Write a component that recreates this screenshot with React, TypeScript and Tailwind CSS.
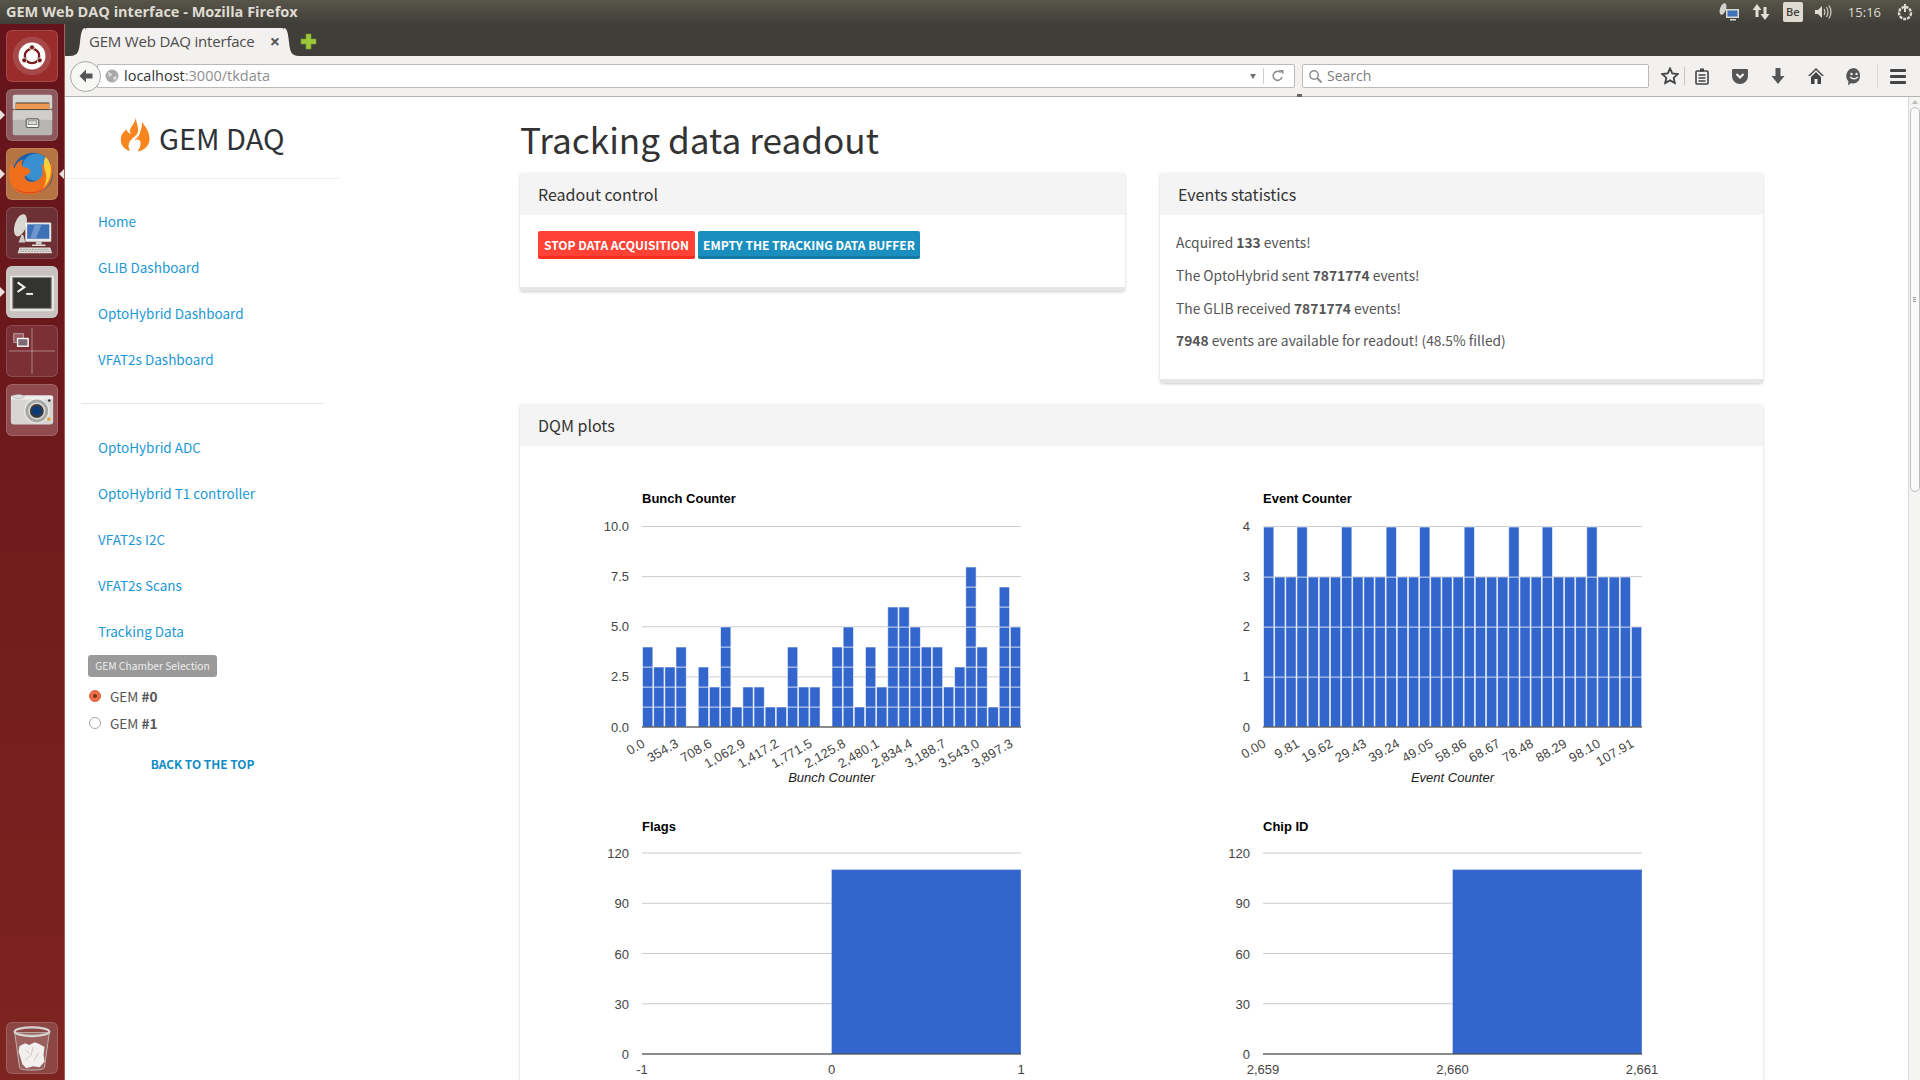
import React from "react";

const chartFont = "'Liberation Sans', Arial, sans-serif";

function Tile({ bg, children, marker, active }: { bg: string; children?: React.ReactNode; marker?: boolean; active?: boolean }) {
  return (
    <div className="relative flex h-[52px] w-[52px] shrink-0 items-center justify-center">
      <div className={`h-[52px] w-[52px] overflow-hidden rounded-[6px] border border-[#ffffff22] ${bg}`}>{children}</div>
      {marker && <div className="absolute left-[-6px] top-[21px] h-0 w-0 border-y-[5px] border-l-[5px] border-y-transparent border-l-[#e8e0dc]" />}
      {active && <div className="absolute right-[-6px] top-[21px] h-0 w-0 border-y-[5px] border-r-[5px] border-y-transparent border-r-[#e8e0dc]" />}
    </div>
  );
}

function UbuntuIcon() {
  return (
    <svg viewBox="0 0 52 52" className="h-full w-full">
      <circle cx="26" cy="26" r="20" fill="#ffffff22" />
      <circle cx="26" cy="26" r="14" fill="#fff" />
      <circle cx="26" cy="26" r="7.5" fill="none" stroke="#7a1c1c" strokeWidth="2.4" />
      <circle cx="26" cy="17" r="2.6" fill="#7a1c1c" stroke="#fff" strokeWidth=".8" />
      <circle cx="18" cy="30.5" r="2.6" fill="#7a1c1c" stroke="#fff" strokeWidth=".8" />
      <circle cx="34" cy="30.5" r="2.6" fill="#7a1c1c" stroke="#fff" strokeWidth=".8" />
    </svg>
  );
}
function FilesIcon() {
  return (
    <svg viewBox="0 0 52 52" className="h-full w-full">
      <rect x="6" y="5" width="41" height="15" rx="2" fill="#d5d4d0" />
      <rect x="9" y="13" width="35" height="10" fill="#3a3a38" />
      <rect x="9" y="14" width="35" height="6" fill="#ee9a54" />
      <rect x="6" y="21" width="41" height="26" rx="2" fill="#b7b6b2" />
      <rect x="6" y="21" width="41" height="10" fill="#cfcecb" />
      <rect x="20" y="30" width="13" height="9" rx="1.5" fill="#f3f3f1" stroke="#5f5f5d" strokeWidth="1.2" />
      <rect x="22" y="32" width="9" height="4" fill="#d9d9d7" stroke="#777" strokeWidth=".8" />
    </svg>
  );
}
function FirefoxIcon() {
  return (
    <svg viewBox="0 0 52 52" className="h-full w-full">
      <circle cx="27" cy="25" r="21" fill="#1d5fa8" />
      <circle cx="30" cy="19" r="14" fill="#3a8fd0" />
      <path d="M46 14c3 8 2 19-6 27-9 8-24 8-32 1C1 35 1 22 5 14c0 3 1 5 3 6 1-4 4-8 9-9-2 3-2 5-1 7 2 2 6 1 8 4 1 3-1 4-4 5-2 1-2 3 0 5 4 4 13 2 16-4 2-4 1-9-1-13 4 2 6 6 6 9 3-3 3-7 5-10z" fill="#ef6f1d" />
      <path d="M40 8c5 4 7 12 5 20-1 5-4 9-7 12 3-6 4-13 1-19-1-5-1-9 1-13z" fill="#fbcf38" />
      <path d="M8 40c8 7 22 7 31 0-6 7-24 9-31 0z" fill="#d9391c" />
    </svg>
  );
}
function RemoteIcon() {
  return (
    <svg viewBox="0 0 52 52" className="h-full w-full">
      <ellipse cx="14" cy="18" rx="6" ry="12" transform="rotate(18 14 18)" fill="#d8d7d2" />
      <path d="M15 28l-3 8h7l-2-8z" fill="#cfcfca" />
      <rect x="19" y="15" width="27" height="20" rx="1" fill="#e9e9e6" />
      <rect x="21" y="17" width="23" height="15" fill="#3f6fb5" />
      <path d="M29 17l-5 15h6l6-15z" fill="#6d96cf" />
      <rect x="30" y="35" width="6" height="3" fill="#cfcfcb" />
      <rect x="26" y="38" width="14" height="1.5" fill="#e5e5e2" />
      <path d="M13 41h32l2 6H11z" fill="#dcdbd7" />
      <path d="M14 43h30M13 45h32" stroke="#8b8885" strokeWidth=".8" strokeDasharray="2 1" />
    </svg>
  );
}
function TerminalIcon() {
  return (
    <svg viewBox="0 0 52 52" className="h-full w-full">
      <rect x="3" y="9" width="46" height="37" rx="1.5" fill="#e7e6e3" />
      <rect x="6" y="11" width="40" height="32" fill="#333431" stroke="#85837f" strokeWidth="1" />
      <path d="M11 16l7 5-7 5" fill="none" stroke="#f2f2f2" strokeWidth="2.2" />
      <rect x="20" y="27" width="7" height="2" fill="#f2f2f2" />
    </svg>
  );
}
function WorkspaceIcon() {
  return (
    <svg viewBox="0 0 52 52" className="h-full w-full">
      <path d="M26 2v48M2 26h48" stroke="#ffffff66" strokeWidth="1" />
      <rect x="7" y="8" width="10" height="9" fill="#ffffff33" stroke="#bba6a6" strokeWidth="1" />
      <rect x="11" y="13" width="11" height="8" fill="#7e6872" stroke="#fff" strokeWidth="1.4" />
    </svg>
  );
}
function CameraIcon() {
  return (
    <svg viewBox="0 0 52 52" className="h-full w-full">
      <rect x="4" y="11" width="44" height="30" rx="3" fill="#d6d5d3" />
      <rect x="4" y="11" width="44" height="4" rx="2" fill="#f0efed" />
      <ellipse cx="12" cy="12" rx="6" ry="2" fill="#e4e3e1" stroke="#999" strokeWidth=".6" />
      <circle cx="31" cy="27" r="12.5" fill="#a9a8a6" stroke="#efefed" strokeWidth="1.2" />
      <circle cx="31" cy="27" r="8" fill="#3a3a3a" stroke="#dcdcda" strokeWidth="1.5" />
      <circle cx="31" cy="27" r="5" fill="#0f3a78" />
      <rect x="42" y="34" width="3" height="3" fill="#e69a2a" />
      <circle cx="44" cy="16" r="1.3" fill="#333" />
    </svg>
  );
}
function TrashIcon() {
  return (
    <svg viewBox="0 0 52 52" className="h-full w-full">
      <path d="M8 10l5 36c0 2 4 3 13 3s13-1 13-3l5-36z" fill="#ffffff22" stroke="#bdb5b3" strokeWidth="1" />
      <ellipse cx="26" cy="9" rx="18" ry="4.5" fill="none" stroke="#d5d3d1" strokeWidth="2.4" />
      <path d="M13 24l6-3 4 2 6-3 5 2 5 3-1 8 1 7-5 6-7-1-7 2-4-4-2-7-2-6z" fill="#f1f0ee" />
      <path d="M19 28l5 4m3-7l-2 9m8-3l-5 8m-9 0l5-5" stroke="#c9c7c5" strokeWidth="1" />
    </svg>
  );
}

function Launcher() {
  return (
    <div className="flex w-[65px] shrink-0 flex-col items-center border-r border-[#a9605a] bg-gradient-to-b from-[#64131a] to-[#7e2420] pb-[6px] pt-[6px]">
      <div className="flex flex-col gap-[7px]">
        <Tile bg="bg-[#9a2c2c]"><UbuntuIcon /></Tile>
        <Tile bg="bg-[#8c5a5c]" marker><FilesIcon /></Tile>
        <Tile bg="bg-[#b77443]" marker active><FirefoxIcon /></Tile>
        <Tile bg="bg-[#6d3034]"><RemoteIcon /></Tile>
        <Tile bg="bg-[#c8c2c2]" marker><TerminalIcon /></Tile>
        <Tile bg="bg-[#7b3036]"><WorkspaceIcon /></Tile>
        <Tile bg="bg-[#8f4b4e]"><CameraIcon /></Tile>
      </div>
      <div className="mt-auto">
        <Tile bg="bg-[#8c4744]"><TrashIcon /></Tile>
      </div>
    </div>
  );
}

function TopBar() {
  return (
    <div className="flex h-[24px] shrink-0 items-center justify-between bg-gradient-to-b from-[#585549] to-[#3f3e39] pl-[6px] pr-[5px] font-['Open_Sans',sans-serif]">
      <span className="text-[14.5px] font-bold leading-none text-[#dfdbd2]">GEM Web DAQ interface - Mozilla Firefox</span>
      <div className="flex items-center text-[#dfdbd2]">
        <svg width="24" height="20" viewBox="0 0 24 20" className="mr-[10px]">
          <ellipse cx="6" cy="7" rx="3" ry="6" transform="rotate(20 6 7)" fill="#d3d2cc" />
          <rect x="9" y="7" width="13" height="9" fill="#d9d9d5" />
          <rect x="10.5" y="8.5" width="10" height="6" fill="#3f73b8" />
          <rect x="13" y="17" width="6" height="1.5" fill="#d9d9d5" />
        </svg>
        <svg width="20" height="20" viewBox="0 0 20 20" className="mr-[12px]">
          <path d="M6 2L1.5 8H4.5V15H7.5V8H10.5Z" fill="#e2dfd7" />
          <path d="M13 18L17.5 12H14.5V5H11.5V12H8.5Z" transform="translate(1 0)" fill="#e2dfd7" />
        </svg>
        <div className="mr-[10px] flex h-[20px] w-[20px] items-center justify-center rounded-[2px] bg-[#dfdbd2] text-[11px] font-semibold text-[#3f3e39]">Be</div>
        <svg width="20" height="20" viewBox="0 0 20 20" className="mr-[15px]">
          <path d="M2 8h3l4-4v12l-4-4H2z" fill="#dfdbd2" />
          <path d="M11 7q2 3 0 6M13.5 5q3 5 0 10M16 3.5q4 6.5 0 13" stroke="#dfdbd2" strokeWidth="1.1" fill="none" />
        </svg>
        <span className="mr-[14px] text-[13px] leading-none">15:16</span>
        <svg width="20" height="20" viewBox="0 0 20 20">
          <circle cx="10" cy="11" r="6" fill="none" stroke="#dfdbd2" strokeWidth="2.4" strokeDasharray="3 1" />
          <path d="M10 2v8" stroke="#dfdbd2" strokeWidth="2" />
        </svg>
      </div>
    </div>
  );
}

function TabStrip() {
  return (
    <div className="flex h-[32px] shrink-0 items-end bg-[#3f3e39] pl-[5px] font-['Open_Sans',sans-serif]">
      <svg width="15" height="28" viewBox="0 0 15 28" className="shrink-0"><path d="M0 28c8 0 9-5 10-14C11 5 12 0 15 0v28z" fill="#f2f1f0" /></svg>
      <div className="flex h-[28px] w-[199px] items-center justify-between rounded-t-[2px] bg-[#f2f1f0] pb-[2px] pl-[4px] pr-[4px]">
        <span className="text-[15px] leading-none tracking-[-0.2px] text-[#4c4c4a]">GEM Web DAQ interface</span>
        <span className="text-[18px] font-bold leading-none text-[#555]">×</span>
      </div>
      <svg width="15" height="28" viewBox="0 0 15 28" className="shrink-0"><path d="M15 28c-8 0-9-5-10-14C4 5 3 0 0 0v28z" fill="#f2f1f0" /></svg>
      <svg width="17" height="17" viewBox="0 0 17 17" className="mb-[6px] ml-[1px]"><path d="M6 1h5v5h5v5h-5v5H6v-5H1V6h5z" fill="#9cc63b" stroke="#7aa02a" strokeWidth=".6" /></svg>
    </div>
  );
}

function Toolbar() {
  return (
    <div className="relative flex h-[41px] shrink-0 items-center border-b border-[#b5b3ae] bg-[#f2f1f0] pr-[6px] font-['Open_Sans',sans-serif]">
      <div className="z-10 ml-[5px] flex h-[31px] w-[31px] shrink-0 items-center justify-center rounded-full border border-[#a9a9a9] bg-[#f7f7f6]">
        <svg width="16" height="16" viewBox="0 0 16 16"><path d="M8 1.5L1.5 8 8 14.5V10.5h6.5v-5H8z" fill="#565656" /></svg>
      </div>
      <div className="ml-[-4px] flex h-[24px] w-[1198px] shrink-0 items-center rounded-r-[2px] border border-[#bcbab6] bg-white pl-[7px] pr-[9px]">
        <svg width="14" height="14" viewBox="0 0 14 14" className="shrink-0"><circle cx="7" cy="7" r="6.5" fill="#a9a9a9" /><path d="M3 3l3 1 1 2-3 2zM8 8l3-1 1 2-3 3z" fill="#dcdcdc" /></svg>
        <span className="ml-[5px] text-[14.5px] leading-none text-[#333]">localhost<span className="text-[#8e8e8e]">:3000/tkdata</span></span>
        <div className="ml-auto h-0 w-0 border-x-[3.5px] border-t-[5px] border-x-transparent border-t-[#6f6f6f]" />
        <div className="ml-[7px] h-[16px] w-px bg-[#d0d0d0]" />
        <svg width="14" height="14" viewBox="0 0 14 14" className="ml-[7px]"><path d="M11 8a4.5 4.5 0 1 1-1.3-4.5" fill="none" stroke="#8d8d8d" strokeWidth="1.6" /><path d="M8 1h4.5v4.5z" fill="#8d8d8d" /></svg>
      </div>
      <div className="ml-[7px] flex h-[24px] w-[347px] shrink-0 items-center rounded-[2px] border border-[#bcbab6] bg-white pl-[5px]">
        <svg width="15" height="15" viewBox="0 0 15 15"><circle cx="6" cy="6" r="4.2" fill="none" stroke="#8d8d8d" strokeWidth="1.4" /><path d="M9 9l4.5 4.5" stroke="#8d8d8d" strokeWidth="2" /></svg>
        <span className="ml-[4px] text-[14px] leading-none text-[#7d7d7d]">Search</span>
      </div>
      <svg width="18" height="18" viewBox="0 0 18 18" className="ml-[12px] shrink-0"><path d="M9 1.5l2.3 5 5.4.6-4 3.6 1.1 5.4L9 13.4l-4.8 2.7 1.1-5.4-4-3.6 5.4-.6z" fill="none" stroke="#444" strokeWidth="1.8" /></svg>
      <div className="ml-[5px] h-[18px] w-px bg-[#c9c7c3]" />
      <svg width="16" height="18" viewBox="0 0 16 18" className="ml-[9px] shrink-0"><rect x="2" y="4" width="12" height="13" rx="1" fill="none" stroke="#444" strokeWidth="1.6" /><rect x="6" y="1.5" width="4" height="3" fill="#444" /><path d="M4.5 8h7M4.5 11h7M4.5 14h7" stroke="#444" strokeWidth="1.5" /></svg>
      <svg width="18" height="18" viewBox="0 0 18 18" className="ml-[21px] shrink-0"><path d="M2 2h14a1 1 0 0 1 1 1v6a8 8 0 0 1-16 0V3a1 1 0 0 1 1-1z" fill="#555" /><path d="M5.5 7L9 10.5 12.5 7" fill="none" stroke="#f2f1f0" strokeWidth="2.2" /></svg>
      <svg width="16" height="18" viewBox="0 0 16 18" className="ml-[21px] shrink-0"><path d="M5.5 1h5v8h4L8 17 1.5 9h4z" fill="#555" /></svg>
      <svg width="18" height="18" viewBox="0 0 18 18" className="ml-[21px] shrink-0"><path d="M9 1L1 9h2l6-6 6 6h2z" fill="#444" /><path d="M9 5l-5 5v7h3.5v-5h3v5H14v-7z" fill="#444" /></svg>
      <svg width="18" height="19" viewBox="0 0 18 19" className="ml-[20px] shrink-0"><path d="M9 1a8 8 0 0 1 0 15.5c-1 0-2 0-3-.5l-3 2.5.5-4A8 8 0 0 1 9 1z" fill="#555" /><circle cx="6.5" cy="7" r="1.2" fill="#f2f1f0" /><circle cx="11.5" cy="7" r="1.2" fill="#f2f1f0" /><path d="M5 10q4 3.5 8 0" fill="none" stroke="#f2f1f0" strokeWidth="1.4" /></svg>
      <div className="ml-[14px] h-[26px] w-px bg-[#dddbd7]" />
      <div className="ml-[12px] flex shrink-0 flex-col gap-[3px]">
        <div className="h-[3px] w-[16px] rounded-[1px] bg-[#444]" />
        <div className="h-[3px] w-[16px] rounded-[1px] bg-[#444]" />
        <div className="h-[3px] w-[16px] rounded-[1px] bg-[#444]" />
      </div>
      <div className="absolute bottom-[-1px] left-[1232px] h-[3px] w-[5px] bg-[#666]" />
    </div>
  );
}

function NavLink({ children }: { children: React.ReactNode }) {
  return <a className="block h-[46px] pl-[33px] text-[13.5px] leading-[46px] text-[#1c98d5]">{children}</a>;
}

function Flame() {
  return (
    <svg width="30" height="35" viewBox="0 0 30 35" className="shrink-0">
      <path d="M15.5 0C16 5 12 8 10.5 11.5C9.5 14 10 15.5 11 17C8.5 16 7 14.5 6.5 12.5C3 15 0 19 1 25C2 30 6 33 10 34C8 31 8 27 10 24C12 21 16 19 17 17C20 13 16 5 15.5 0Z" fill="#f8851d" />
      <path d="M22 5C22.5 9 20.5 13 20 16C19.5 19 15.5 21.5 14.5 24C16 22 19 22 20 24C21.5 27 20 31 17.5 34.5C24 33.5 29 29 29.5 23C30 15 25 9 22 5Z" fill="#f8851d" />
    </svg>
  );
}

function Sidebar() {
  return (
    <div className="flex w-[275px] shrink-0 flex-col">
      <div className="flex h-[82px] items-start border-b border-[#eeeeee] pl-[55px] pt-[20px]">
        <Flame />
        <span className="ml-[9px] mt-[1px] text-[29px] leading-[38px] text-[#2f3338]">GEM DAQ</span>
      </div>
      <div className="pt-[19px]">
        <NavLink>Home</NavLink>
        <NavLink>GLIB Dashboard</NavLink>
        <NavLink>OptoHybrid Dashboard</NavLink>
        <NavLink>VFAT2s Dashboard</NavLink>
      </div>
      <div className="mx-[16px] mt-[21px] border-t border-[#e8e8e8]" />
      <div className="pt-[20px]">
        <NavLink>OptoHybrid ADC</NavLink>
        <NavLink>OptoHybrid T1 controller</NavLink>
        <NavLink>VFAT2s I2C</NavLink>
        <NavLink>VFAT2s Scans</NavLink>
        <NavLink>Tracking Data</NavLink>
      </div>
      <div className="ml-[23px] mt-[1px] flex h-[22px] w-[129px] items-center justify-center rounded-[3px] bg-[#9a9a9a] text-[10.25px] leading-none text-[#eeeeee]">GEM Chamber Selection</div>
      <div className="ml-[24px] mt-[8px] flex h-[22px] items-center text-[13.6px] text-[#555]">
        <div className="flex h-[12px] w-[12px] items-center justify-center rounded-full border border-[#d9603a] bg-[#ec6f45]">
          <div className="h-[4px] w-[4px] rounded-full bg-[#7a3320]" />
        </div>
        <span className="ml-[9px]">GEM <b>#0</b></span>
      </div>
      <div className="ml-[24px] mt-[5px] flex h-[22px] items-center text-[13.6px] text-[#555]">
        <div className="h-[12px] w-[12px] rounded-full border border-[#a5a5a5] bg-white" />
        <span className="ml-[9px]">GEM <b>#1</b></span>
      </div>
      <div className="mt-[22px] text-center text-[11.9px] font-bold leading-[16px] text-[#0f8bc6]">BACK TO THE TOP</div>
    </div>
  );
}

function Panel({ title, className, children }: { title: string; className: string; children: React.ReactNode }) {
  return (
    <div className={`overflow-hidden rounded-[3px] bg-white shadow-[0_1px_3px_rgba(0,0,0,0.2)] ${className}`}>
      <div className="flex h-[42px] items-center bg-[#f4f4f4] pb-[1px] pl-[18px] text-[16px] text-[#333]">{title}</div>
      {children}
    </div>
  );
}

const PLOT_X = 122;
const PLOT_W = 379;

function Histogram({ title, values, unit, ticks, labels, axis }: { title: string; values: number[]; unit: number; ticks: string[]; labels: string[]; axis: string }) {
  const top = 66.5;
  const base = 267;
  const pitch = PLOT_W / 34;
  return (
    <svg width="621" height="327" style={{ fontFamily: chartFont }}>
      <text x={PLOT_X} y="43" fontSize="13" fontWeight="700" fill="#000">{title}</text>
      {ticks.map((t, i) => {
        const y = base - (i * (base - top)) / (ticks.length - 1);
        return (
          <g key={t}>
            <line x1={PLOT_X} x2={PLOT_X + PLOT_W} y1={y} y2={y} stroke="#cccccc" />
            <text x={PLOT_X - 13} y={y + 4.6} textAnchor="end" fontSize="13" fill="#444">{t}</text>
          </g>
        );
      })}
      {values.map((v, i) =>
        Array.from({ length: v }).map((_, j) => (
          <rect key={`${i}-${j}`} x={PLOT_X + i * pitch + 0.5} y={base - (j + 1) * unit} width={pitch - 0.8} height={unit} fill="#3366cc" stroke="#ffffff" strokeOpacity="0.65" strokeWidth="0.9" />
        ))
      )}
      <line x1={PLOT_X} x2={PLOT_X + PLOT_W} y1={base} y2={base} stroke="#333333" />
      {labels.map((l, i) => {
        const x = PLOT_X + i * pitch * 3 + 4;
        return <text key={l} transform={`translate(${x} 286) rotate(-30)`} textAnchor="end" fontSize="13" letterSpacing="0.2" fill="#444">{l}</text>;
      })}
      <text x={PLOT_X + PLOT_W / 2} y="322" textAnchor="middle" fontSize="13" fontStyle="italic" fill="#222">{axis}</text>
    </svg>
  );
}

function SingleBar({ title, labels }: { title: string; labels: string[] }) {
  const top = 66;
  const base = 267;
  return (
    <svg width="621" height="300" style={{ fontFamily: chartFont }}>
      <text x={PLOT_X} y="44" fontSize="13" fontWeight="700" fill="#000">{title}</text>
      {["0", "30", "60", "90", "120"].map((t, i) => {
        const y = base - (i * (base - top)) / 4;
        return (
          <g key={t}>
            <line x1={PLOT_X} x2={PLOT_X + PLOT_W} y1={y} y2={y} stroke="#cccccc" />
            <text x={PLOT_X - 13} y={y + 5} textAnchor="end" fontSize="13" fill="#444">{t}</text>
          </g>
        );
      })}
      <rect x={PLOT_X + PLOT_W / 2} y="82.5" width={PLOT_W / 2} height={base - 82.5} fill="#3366cc" stroke="#ffffff" strokeOpacity="0.4" strokeWidth="0.8" />
      <line x1={PLOT_X} x2={PLOT_X + PLOT_W} y1={base} y2={base} stroke="#333333" />
      <text x={PLOT_X} y="287" textAnchor="middle" fontSize="13" fill="#444">{labels[0]}</text>
      <text x={PLOT_X + PLOT_W / 2} y="287" textAnchor="middle" fontSize="13" fill="#444">{labels[1]}</text>
      <text x={PLOT_X + PLOT_W} y="287" textAnchor="middle" fontSize="13" fill="#444">{labels[2]}</text>
    </svg>
  );
}

function Main() {
  return (
    <div className="min-w-0 flex-1 pl-[180px]">
      <h1 className="h-[76px] pt-[19px] text-[35.2px] font-normal leading-[46px] text-[#333]">Tracking data readout</h1>
      <div className="flex items-start">
        <Panel title="Readout control" className="h-[118px] w-[605px] border-b-4 border-[#e6e6e6]">
          <div className="flex gap-[3px] pl-[18px] pt-[16px]">
            <button className="h-[28px] w-[157px] whitespace-nowrap rounded-[2px] border-b-[3px] border-[#ff2d20] bg-[#ff4136] pt-[3px] text-[12px] font-bold leading-none text-white">STOP DATA ACQUISITION</button>
            <button className="h-[28px] w-[222px] whitespace-nowrap rounded-[2px] border-b-[3px] border-[#137aa6] bg-[#1a8fbf] pt-[3px] text-[12px] font-bold leading-none text-white">EMPTY THE TRACKING DATA BUFFER</button>
          </div>
        </Panel>
        <Panel title="Events statistics" className="ml-[35px] h-[210px] w-[603px] border-b-4 border-[#e6e6e6]">
          <div className="pl-[16px] pt-[11px] text-[13.8px] leading-[32.8px] text-[#555]">
            <p>Acquired <b>133</b> events!</p>
            <p>The OptoHybrid sent <b>7871774</b> events!</p>
            <p>The GLIB received <b>7871774</b> events!</p>
            <p><b>7948</b> events are available for readout! (48.5% filled)</p>
          </div>
        </Panel>
      </div>
      <Panel title="DQM plots" className="mt-[21px] h-[700px] w-[1243px]">
        <div className="grid grid-cols-[621px_621px] pt-[14px]">
          <Histogram
            title="Bunch Counter"
            values={[4,3,3,4,0,3,2,5,1,2,2,1,1,4,2,2,0,4,5,1,4,2,6,6,5,4,4,2,3,8,4,1,7,5]}
            unit={20}
            ticks={["0.0","2.5","5.0","7.5","10.0"]}
            labels={["0.0","354.3","708.6","1,062.9","1,417.2","1,771.5","2,125.8","2,480.1","2,834.4","3,188.7","3,543.0","3,897.3"]}
            axis="Bunch Counter"
          />
          <Histogram
            title="Event Counter"
            values={[4,3,3,4,3,3,3,4,3,3,3,4,3,3,4,3,3,3,4,3,3,3,4,3,3,4,3,3,3,4,3,3,3,2]}
            unit={50}
            ticks={["0","1","2","3","4"]}
            labels={["0.00","9.81","19.62","29.43","39.24","49.05","58.86","68.67","78.48","88.29","98.10","107.91"]}
            axis="Event Counter"
          />
          <SingleBar title="Flags" labels={["-1","0","1"]} />
          <SingleBar title="Chip ID" labels={["2,659","2,660","2,661"]} />
        </div>
      </Panel>
    </div>
  );
}

function Scrollbar() {
  return (
    <div className="flex w-[12px] shrink-0 flex-col items-center border-l border-[#d8d8d8] bg-[#f4f4f3]">
      <div className="mt-[3px] h-0 w-0 border-x-[3px] border-b-[4px] border-x-transparent border-b-[#bdbdbd]" />
      <div className="mt-[3px] flex h-[385px] w-[10px] items-center justify-center rounded-[5px] border border-[#bdbdbd] bg-[#fafafa]">
        <div className="flex flex-col gap-[1px]">
          <div className="h-px w-[3px] bg-[#999]" />
          <div className="h-px w-[3px] bg-[#999]" />
          <div className="h-px w-[3px] bg-[#999]" />
        </div>
      </div>
    </div>
  );
}

export default function App() {
  return (
    <div className="flex h-[1080px] w-[1920px] flex-col overflow-hidden bg-white font-['Noto_Sans_CJK_SC',sans-serif]">
      <TopBar />
      <div className="flex min-h-0 flex-1">
        <Launcher />
        <div className="flex min-w-0 flex-1 flex-col">
          <TabStrip />
          <Toolbar />
          <div className="flex min-h-0 flex-1 overflow-hidden">
            <Sidebar />
            <Main />
            <Scrollbar />
          </div>
        </div>
      </div>
    </div>
  );
}
